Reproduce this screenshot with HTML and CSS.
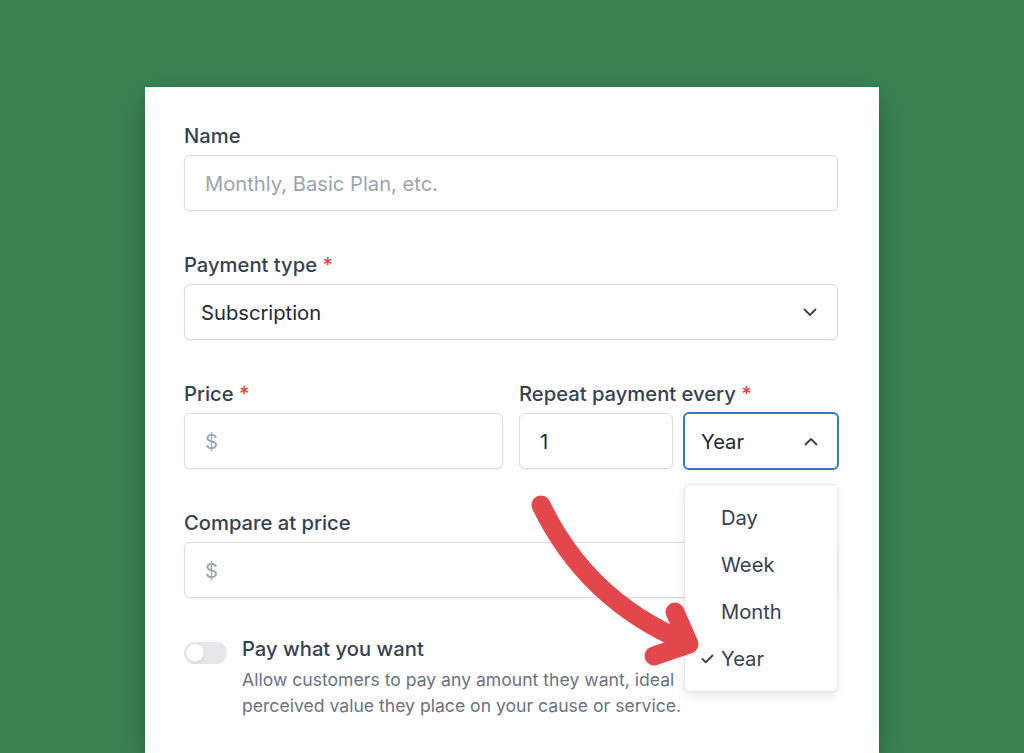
FILE: index.html
```html
<!DOCTYPE html>
<html lang="en">
<head>
<meta charset="utf-8">
<title>Plan form</title>
<link rel="stylesheet" href="styles.css">
</head>
<body>
<div class="card">
  <div class="field">
    <label class="label">Name</label>
    <div class="input placeholder">Monthly, Basic Plan, etc.</div>
  </div>
  <div class="field">
    <label class="label">Payment type <span class="req">*</span></label>
    <div class="input select">
      <span>Subscription</span>
      <svg class="chev" width="14" height="9" viewBox="0 0 14 9"><path d="M1.5 1.5 L7 7 L12.5 1.5" fill="none" stroke="#374151" stroke-width="1.8" stroke-linecap="round" stroke-linejoin="round"/></svg>
    </div>
  </div>
  <div class="field row">
    <div class="col">
      <label class="label">Price <span class="req">*</span></label>
      <div class="input placeholder">$</div>
    </div>
    <div class="col">
      <label class="label">Repeat payment every <span class="req">*</span></label>
      <div class="pair">
        <div class="input value one">1</div>
        <div class="selwrap">
          <div class="input select focused">
            <span>Year</span>
            <svg class="chev" width="14" height="9" viewBox="0 0 14 9"><path d="M1.5 7.5 L7 2 L12.5 7.5" fill="none" stroke="#374151" stroke-width="1.8" stroke-linecap="round" stroke-linejoin="round"/></svg>
          </div>
          <ul class="menu">
            <li>Day</li>
            <li>Week</li>
            <li>Month</li>
            <li class="sel"><svg class="check" width="13" height="10" viewBox="0 0 13 10"><path d="M1.5 5 L4.8 8.3 L11.5 1.5" fill="none" stroke="#374151" stroke-width="1.9" stroke-linecap="round" stroke-linejoin="round"/></svg>Year</li>
          </ul>
        </div>
      </div>
    </div>
  </div>
  <div class="field">
    <label class="label">Compare at price</label>
    <div class="input placeholder">$</div>
  </div>
  <div class="toggle-row">
    <div class="toggle"><span class="knob"></span></div>
    <div class="toggle-text">
      <div class="toggle-title">Pay what you want</div>
      <p class="desc">Allow customers to pay any amount they want, ideal<br>perceived value they place on your cause or service.</p>
    </div>
  </div>
</div>
<svg class="arrow" width="1024" height="753" viewBox="0 0 1024 753">
  <g fill="none" stroke="#e2474b" stroke-width="19" stroke-linecap="round" stroke-linejoin="round">
    <path d="M541 505 C 570 565 615 612 686 642"/>
    <path d="M675 612 L689 644 L654 656"/>
  </g>
</svg>
</body>
</html>
```
FILE: styles.css
```css
* { box-sizing: border-box; }
html, body { margin: 0; padding: 0; }
body {
  width: 1024px;
  height: 753px;
  overflow: hidden;
  background: #3a8351;
  font-family: "Inter", "Liberation Sans", sans-serif;
  position: relative;
}
.card {
  margin: 87px 0 0 145px;
  width: 734px;
  height: 666px;
  overflow: hidden;
  background: #fff;
  padding: 36px 41px 0 39px;
  box-shadow: 0 10px 30px rgba(0,0,0,0.22), 0 4px 8px rgba(0,0,0,0.08);
}
.field { margin-bottom: 41px; }
.label {
  display: block;
  font-size: 20.2px;
  line-height: 26px;
  font-weight: 500;
  color: #374151;
  margin-bottom: 6px;
}
.req { color: #e53e3e; }
.input {
  height: 56px;
  border: 1px solid #d8dbe0;
  border-radius: 6px;
  box-shadow: 0 1px 2px rgba(0,0,0,0.06);
  background: #fff;
  display: flex;
  align-items: center;
  padding: 0 20px;
  font-size: 20.2px;
  color: #1f2937;
}
.placeholder { color: #9ca3af; }
.select {
  padding: 0 20px 0 16px;
  justify-content: space-between;
}
.row {
  display: grid;
  grid-template-columns: 1fr 1fr;
  column-gap: 16px;
}
.pair {
  display: grid;
  grid-template-columns: 1fr 1fr;
  column-gap: 11px;
}
.selwrap { position: relative; }
.focused {
  border: 2px solid #3478c4;
  margin: -1px;
  height: 58px;
  padding-left: 16px;
  padding-right: 19px;
}
.menu {
  position: absolute;
  top: 71px;
  left: 0;
  width: 154px;
  margin: 0;
  padding: 9px 0;
  list-style: none;
  background: #fff;
  border: 1px solid #e5e7eb;
  border-radius: 6px;
  box-shadow: 0 4px 12px rgba(0,0,0,0.08), 0 1px 3px rgba(0,0,0,0.05);
  z-index: 2;
}
.menu li {
  height: 47px;
  line-height: 47px;
  padding-left: 36px;
  font-size: 20.2px;
  color: #374151;
  position: relative;
}
.check {
  position: absolute;
  left: 16px;
  top: 19px;
}
.toggle-row {
  display: flex;
  align-items: flex-start;
  margin-top: -3px;
}
.toggle {
  width: 43px;
  height: 22px;
  border-radius: 11px;
  background: #e5e7eb;
  margin-top: 6px;
  flex: none;
  position: relative;
}
.knob {
  position: absolute;
  left: 2px;
  top: 2px;
  width: 18px;
  height: 18px;
  border-radius: 50%;
  background: #fff;
  box-shadow: 0 1px 2px rgba(0,0,0,0.15);
}
.toggle-text { margin-left: 15px; }
.toggle-title {
  font-size: 20.2px;
  line-height: 26px;
  font-weight: 500;
  color: #374151;
}
.desc {
  margin: 5px 0 0 0;
  font-size: 17.6px;
  line-height: 26px;
  color: #6b7280;
  white-space: nowrap;
}
.arrow {
  position: absolute;
  left: 0;
  top: 0;
  pointer-events: none;
  z-index: 5;
}
```
